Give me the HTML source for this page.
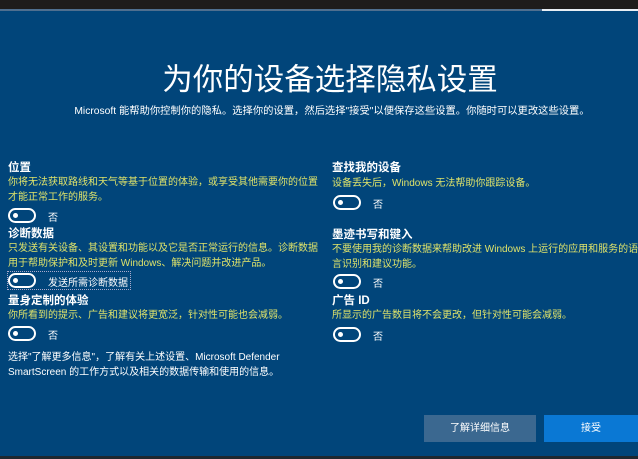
<!DOCTYPE html>
<html><head><meta charset="utf-8"><style>
body{margin:0;width:638px;height:459px;overflow:hidden;background:#01457a;font-family:"Liberation Sans","Noto Sans CJK SC",sans-serif;color:#fff;position:relative}
.top{position:absolute;left:0;top:0;width:638px;height:9px;background:#1e1c1b}
.line{position:absolute;left:0;top:9px;width:638px;height:2px;background:#4f6f8f}
.line2{position:absolute;left:542px;top:9px;width:96px;height:2px;background:#e8eef4}
.bot{position:absolute;left:0;top:456px;width:638px;height:3px;background:#1e2830}
h1{position:absolute;top:61px;left:11px;width:638px;text-align:center;margin:0;font-weight:normal;font-size:30.5px;line-height:38px}
.sub{position:absolute;top:102px;left:13px;width:638px;text-align:center;font-size:10.3px}
.a{position:absolute;font-size:10.5px;line-height:15px}
.h{font-weight:bold;color:#fff;font-size:11.5px}
.y{color:#dfe36a;font-size:10px;line-height:15px}
.t{position:absolute;width:24px;height:11px;border:2px solid #fff;border-radius:8px}
.t::after{content:"";position:absolute;left:3px;top:3px;width:5px;height:5px;border-radius:50%;background:#fff}
.l{position:absolute;font-size:10px}
.b{position:absolute;top:415px;height:27px;line-height:27px;text-align:center;font-size:10px}
</style></head><body>
<div class="top"></div><div class="line"></div><div class="line2"></div>
<h1>为你的设备选择隐私设置</h1>
<div class="sub">Microsoft 能帮助你控制你的隐私。选择你的设置，然后选择"接受"以便保存这些设置。你随时可以更改这些设置。</div>

<div class="a h" style="left:8px;top:161px">位置</div>
<div class="a y" style="left:8px;top:175px;width:312px">你将无法获取路线和天气等基于位置的体验，或享受其他需要你的位置才能正常工作的服务。</div>
<div class="t" style="left:8px;top:208px"></div><div class="l" style="left:48px;top:209px">否</div>

<div class="a h" style="left:8px;top:227px">诊断数据</div>
<div class="a y" style="left:8px;top:241px;width:315px">只发送有关设备、其设置和功能以及它是否正常运行的信息。诊断数据用于帮助保护和及时更新 Windows、解决问题并改进产品。</div>
<div style="position:absolute;left:7px;top:271px;width:122px;height:17px;border:1px dotted #aac"></div>
<div class="t" style="left:8px;top:273px"></div><div class="l" style="left:48px;top:274px">发送所需诊断数据</div>

<div class="a h" style="left:8px;top:294px">量身定制的体验</div>
<div class="a y" style="left:8px;top:308px">你所看到的提示、广告和建议将更宽泛，针对性可能也会减弱。</div>
<div class="t" style="left:8px;top:326px"></div><div class="l" style="left:48px;top:327px">否</div>

<div class="a" style="left:8px;top:350px;font-size:10px">选择"了解更多信息"，了解有关上述设置、Microsoft Defender<br>SmartScreen 的工作方式以及相关的数据传输和使用的信息。</div>

<div class="a h" style="left:332px;top:161px">查找我的设备</div>
<div class="a y" style="left:332px;top:176px">设备丢失后，Windows 无法帮助你跟踪设备。</div>
<div class="t" style="left:333px;top:195px"></div><div class="l" style="left:373px;top:196px">否</div>

<div class="a h" style="left:332px;top:228px">墨迹书写和键入</div>
<div class="a y" style="left:332px;top:242px;width:310px;white-space:nowrap">不要使用我的诊断数据来帮助改进 Windows 上运行的应用和服务的语<br>言识别和建议功能。</div>
<div class="t" style="left:333px;top:274px"></div><div class="l" style="left:373px;top:275px">否</div>

<div class="a h" style="left:332px;top:294px">广告 ID</div>
<div class="a y" style="left:332px;top:308px">所显示的广告数目将不会更改，但针对性可能会减弱。</div>
<div class="t" style="left:333px;top:327px"></div><div class="l" style="left:373px;top:328px">否</div>

<div class="b" style="left:424px;width:112px;background:#3b6890">了解详细信息</div>
<div class="b" style="left:544px;width:94px;background:#0a78d4">接受</div>
<div class="bot"></div>
</body></html>
